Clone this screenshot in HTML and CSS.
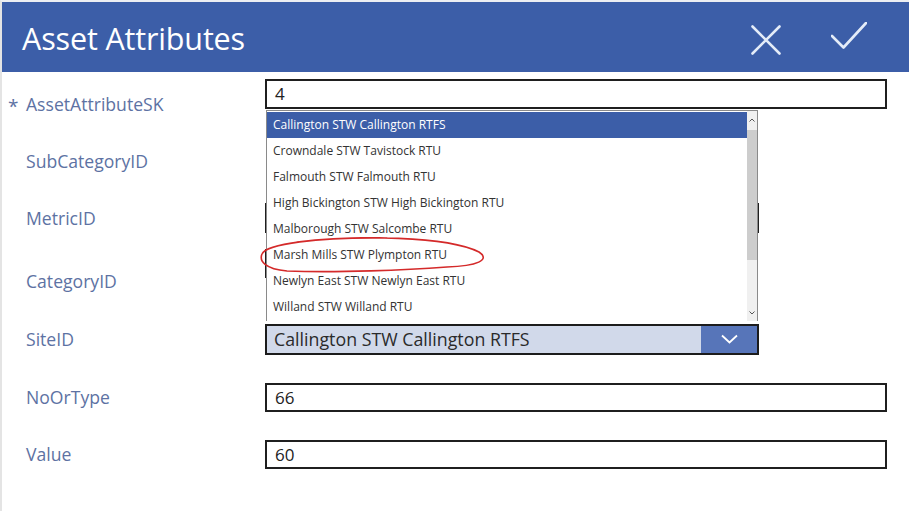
FILE: index.html
```html
<!DOCTYPE html>
<html lang="en">
<head>
<meta charset="utf-8">
<title>Asset Attributes</title>
<link rel="stylesheet" href="styles.css">
</head>
<body>
<div class="app">
  <header class="header">
    <h1 class="title">Asset Attributes</h1>
    <div class="actions">
      <svg class="icon icon-x" viewBox="0 0 30 30" width="30" height="30"><path d="M1.5 1.5 L28.5 28.5 M28.5 1.5 L1.5 28.5"/></svg>
      <svg class="icon icon-check" viewBox="0 0 36 28" width="36" height="28"><path d="M1 14 L12.5 25.5 L35 1"/></svg>
    </div>
  </header>
  <main class="form">
    <div class="row r1">
      <label class="label"><span class="req">*</span>AssetAttributeSK</label>
      <div class="input wide">4</div>
    </div>
    <div class="row r2">
      <label class="label">SubCategoryID</label>
    </div>
    <div class="row r3">
      <label class="label">MetricID</label>
      <div class="input narrow"></div>
    </div>
    <div class="row r4">
      <label class="label">CategoryID</label>
      <div class="input short"></div>
    </div>
    <div class="row r5">
      <label class="label">SiteID</label>
      <div class="select">
        <span class="select-value">Callington STW Callington RTFS</span>
        <span class="select-btn"><svg viewBox="0 0 17 10" width="17" height="10"><path d="M1 1.5 L8.5 8.5 L16 1.5"/></svg></span>
      </div>
    </div>
    <div class="row r6">
      <label class="label">NoOrType</label>
      <div class="input wide">66</div>
    </div>
    <div class="row r7">
      <label class="label">Value</label>
      <div class="input wide">60</div>
    </div>

    <ul class="list">
      <li class="item selected">Callington STW Callington RTFS</li>
      <li class="item">Crowndale STW Tavistock RTU</li>
      <li class="item">Falmouth STW Falmouth RTU</li>
      <li class="item">High Bickington STW High Bickington RTU</li>
      <li class="item">Malborough STW Salcombe RTU</li>
      <li class="item">Marsh Mills STW Plympton RTU</li>
      <li class="item">Newlyn East STW Newlyn East RTU</li>
      <li class="item">Willand STW Willand RTU</li>
      <li class="scrollbar">
        <span class="sb-arrow up"><svg viewBox="0 0 6 4" width="6" height="4"><path d="M0.5 3.5 L3 1 L5.5 3.5"/></svg></span>
        <span class="sb-track"><span class="sb-thumb"></span></span>
        <span class="sb-arrow down"><svg viewBox="0 0 6 4" width="6" height="4"><path d="M0.5 0.5 L3 3 L5.5 0.5"/></svg></span>
      </li>
    </ul>

    <svg class="scribble" viewBox="0 0 230 42" width="230" height="42"><path d="M40 8 C 100 1, 190 2, 222 18 C 234 26, 220 32, 190 33 C 150 36, 80 39, 30 37 C 8 35, 2 27, 5 20 C 9 10, 60 3, 130 4"/></svg>
  </main>
</div>
</body>
</html>
```

FILE: styles.css
```css
* { box-sizing: border-box; }
html, body { margin: 0; padding: 0; background: #ffffff; }
body {
  font-family: "Open Sans", "Noto Sans", "Liberation Sans", sans-serif;
  width: 909px;
  height: 511px;
  overflow: hidden;
}
.app {
  width: 909px;
  height: 511px;
  border-top: 2px solid #eceef2;
  border-left: 2px solid #e4e4e4;
  background: #ffffff;
}
.header {
  height: 70px;
  background: #3c5ea8;
  display: flex;
  align-items: center;
  justify-content: space-between;
  padding-left: 20px;
  padding-right: 42px;
}
.title {
  margin: 0;
  color: #ffffff;
  font-weight: 400;
  font-size: 30.5px;
  letter-spacing: -0.15px;
  line-height: 1;
  padding-top: 2px;
}
.actions {
  display: flex;
  align-items: center;
  gap: 50px;
}
.icon path {
  fill: none;
  stroke: #e4ecf8;
  stroke-width: 2.6;
  stroke-linecap: round;
  stroke-linejoin: round;
}
.icon-x { margin-top: 6px; }
.icon-check { margin-bottom: 2px; }

.form { position: relative; }
.row {
  display: flex;
  align-items: center;
}
.r1 { height: 54px; }
.r2 { height: 70px; }
.r3 { height: 44px; }
.r4 { height: 80px; align-items: flex-start; }
.r5 { height: 38px; }
.r6 { height: 78px; }
.r7 { height: 36px; }
.label {
  width: 263px;
  flex: none;
  padding-left: 24px;
  color: #5d72a3;
  font-size: 17.6px;
  position: relative;
}
.req {
  position: absolute;
  left: 6px;
  top: 1px;
  font-size: 19px;
}
.r1 .label { margin-top: 10px; }
.r1 .input { margin-bottom: 10px; }
.r4 .label { margin-top: 29px; }
.r4 .input { margin-top: 9px; }
.input {
  height: 30px;
  border: 2px solid #1f1f1f;
  background: #ffffff;
  color: #222222;
  font-size: 17px;
  line-height: 25px;
  padding-left: 8px;
}
.r6 .input, .r7 .input { height: 29px; }
.wide { width: 622px; }
.narrow { width: 494px; }
.short { width: 470px; height: 29px; }
.select {
  width: 494px;
  height: 31px;
  border: 2px solid #1c1c1c;
  background: #d1d9ea;
  display: flex;
  align-items: stretch;
}
.select-value {
  flex: 1;
  color: #2a2a2a;
  font-size: 17.8px;
  line-height: 26px;
  padding-left: 7px;
}
.select-btn {
  width: 56px;
  background: #5775b9;
  display: flex;
  align-items: center;
  justify-content: center;
}
.select-btn path {
  fill: none;
  stroke: #ffffff;
  stroke-width: 1.8;
}

.list {
  position: absolute;
  left: 264px;
  top: 38px;
  width: 492px;
  height: 211px;
  margin: 0;
  padding: 1px 10px 0 0;
  list-style: none;
  background: #ffffff;
  border: 1px solid #8a8a8a;
  border-bottom: none;
}
.item {
  height: 26px;
  line-height: 26px;
  padding-left: 6px;
  font-size: 12px;
  color: #333333;
  white-space: nowrap;
}
.item.selected {
  background: #3c5ea8;
  color: #ffffff;
}
.scrollbar {
  position: absolute;
  top: 0;
  right: 0;
  width: 10px;
  height: 210px;
  background: #f0f0f0;
  display: flex;
  flex-direction: column;
}
.sb-arrow {
  height: 17px;
  display: flex;
  align-items: center;
  justify-content: center;
}
.sb-arrow path { fill: none; stroke: #555555; stroke-width: 1; }
.sb-track { flex: 1; position: relative; }
.sb-thumb {
  position: absolute;
  left: 0;
  right: 0;
  top: 2px;
  height: 130px;
  background: #cdcdcd;
}
.scribble {
  position: absolute;
  left: 255px;
  top: 162px;
  overflow: visible;
}
.scribble path {
  fill: none;
  stroke: #d42a2a;
  stroke-width: 1.6;
  stroke-linecap: round;
}
```
